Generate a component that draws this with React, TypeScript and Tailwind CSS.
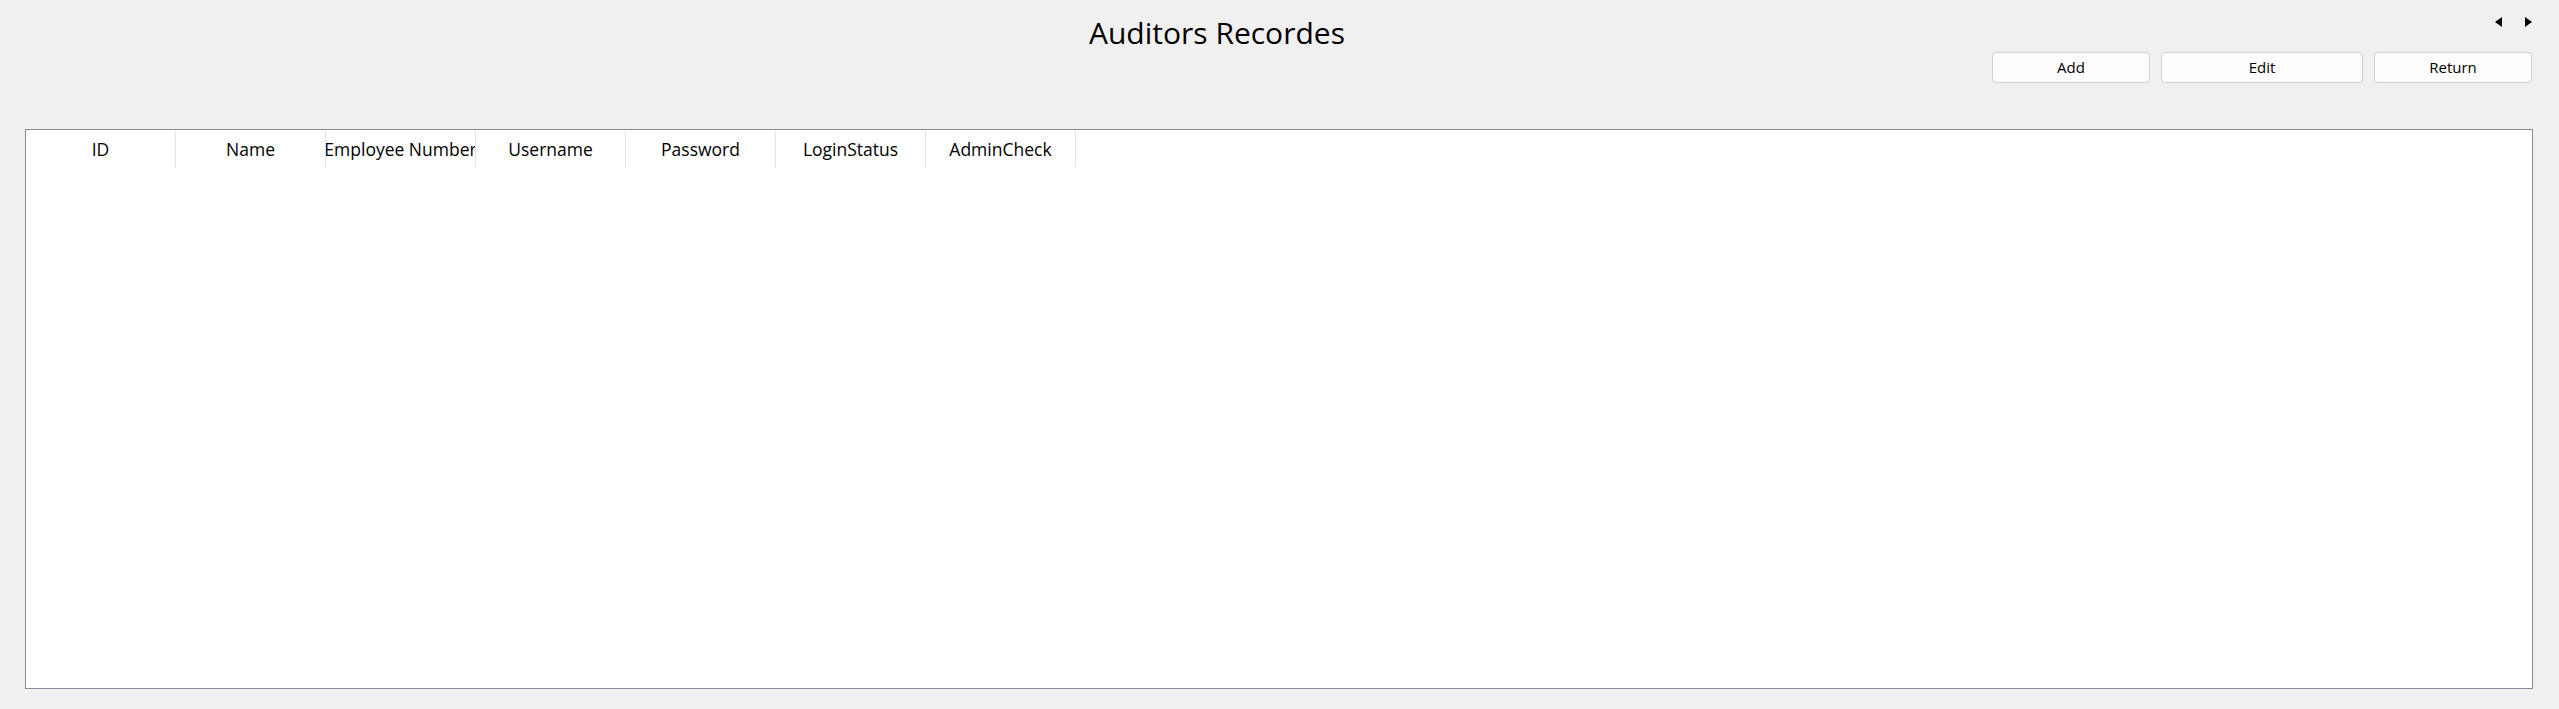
import React from "react";

const cols = ["ID", "Name", "Employee Number", "Username", "Password", "LoginStatus", "AdminCheck"];

function Btn({ label, w }: { label: string; w: string }) {
  return (
    <button
      className={`${w} h-[31px] bg-[#fdfdfd] border border-[#d0d0d0] rounded-[4px] text-[15px] text-black flex items-center justify-center`}
    >
      {label}
    </button>
  );
}

export default function App() {
  return (
    <div
      className="w-[2559px] h-[709px] bg-[#f0f0f0] pl-[25px] pr-[26px] overflow-hidden"
      style={{ fontFamily: '"Segoe UI", "Open Sans", "Noto Sans", sans-serif' }}
    >
      <div className="flex h-[129px]">
        <div className="flex-1 pl-[1064px] pt-[13px]">
          <h1 className="text-[30px] leading-[40px] text-black font-normal whitespace-nowrap">Auditors Recordes</h1>
        </div>
        <div className="flex flex-col items-end pt-[17px]">
          <div className="flex gap-[23px] h-[10px] mr-[1px]">
            <svg width="7" height="10" viewBox="0 0 7 10">
              <polygon points="7,0 7,10 0,5" fill="#000" />
            </svg>
            <svg width="7" height="10" viewBox="0 0 7 10">
              <polygon points="0,0 0,10 7,5" fill="#000" />
            </svg>
          </div>
          <div className="flex gap-[11px] mt-[25px] mr-[1px]">
            <Btn label="Add" w="w-[158px]" />
            <Btn label="Edit" w="w-[202px]" />
            <Btn label="Return" w="w-[158px]" />
          </div>
        </div>
      </div>
      <div className="h-[560px] border border-[#878b93] bg-white">
        <div className="flex h-[37px] pt-[1px]">
          {cols.map((c) => (
            <div
              key={c}
              className="w-[150px] shrink-0 border-r border-[#e3e3e3] flex items-center justify-center overflow-hidden whitespace-nowrap text-[17.5px] text-black"
            >
              <span className="shrink-0">{c}</span>
            </div>
          ))}
        </div>
      </div>
    </div>
  );
}
